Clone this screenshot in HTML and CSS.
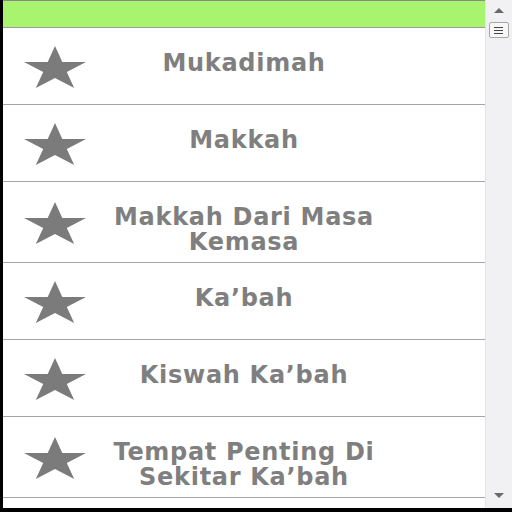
FILE: index.html
```html
<!DOCTYPE html>
<html lang="id">
<head>
  <meta charset="UTF-8">
  <meta name="viewport" content="width=device-width, initial-scale=1.0">
  <title>Sejarah Makkah</title>
  <link rel="stylesheet" href="styles.css">
</head>
<body>

  <div class="screen">
    <!-- Menu list -->
    <div class="list">
      <div class="header"></div>

      <div class="item">
        <svg class="star" viewBox="0 0 62 42"><polygon points="31,0 38.3,16 62,16 42.8,25.9 50.2,42 31,32.1 11.8,42 19.2,25.9 0,16 23.7,16"/></svg>
        <span class="title">Mukadimah</span>
      </div>
      <div class="item">
        <svg class="star" viewBox="0 0 62 42"><polygon points="31,0 38.3,16 62,16 42.8,25.9 50.2,42 31,32.1 11.8,42 19.2,25.9 0,16 23.7,16"/></svg>
        <span class="title">Makkah</span>
      </div>
      <div class="item">
        <svg class="star" viewBox="0 0 62 42"><polygon points="31,0 38.3,16 62,16 42.8,25.9 50.2,42 31,32.1 11.8,42 19.2,25.9 0,16 23.7,16"/></svg>
        <span class="title">Makkah Dari Masa Kemasa</span>
      </div>
      <div class="item">
        <svg class="star" viewBox="0 0 62 42"><polygon points="31,0 38.3,16 62,16 42.8,25.9 50.2,42 31,32.1 11.8,42 19.2,25.9 0,16 23.7,16"/></svg>
        <span class="title">Ka’bah</span>
      </div>
      <div class="item">
        <svg class="star" viewBox="0 0 62 42"><polygon points="31,0 38.3,16 62,16 42.8,25.9 50.2,42 31,32.1 11.8,42 19.2,25.9 0,16 23.7,16"/></svg>
        <span class="title">Kiswah Ka’bah</span>
      </div>
      <div class="item">
        <svg class="star" viewBox="0 0 62 42"><polygon points="31,0 38.3,16 62,16 42.8,25.9 50.2,42 31,32.1 11.8,42 19.2,25.9 0,16 23.7,16"/></svg>
        <span class="title">Tempat Penting Di Sekitar Ka’bah</span>
      </div>
    </div>

    <!-- Fake scrollbar -->
    <div class="scrollbar">
      <span class="arrow up"></span>
      <div class="thumb">
        <span></span><span></span><span></span>
      </div>
      <div class="track"></div>
      <span class="arrow down"></span>
    </div>
  </div>

</body>
</html>
```

FILE: styles.css
```css
/* Basic page styles */
body, html {
  margin: 0;
  padding: 0;
  background-color: #000;
  height: 100%;
  overflow: hidden;
}

.screen {
  display: flex;
  margin-left: 3px;
  height: 508px;
  background-color: #fff;
  overflow: hidden;
}

/* List */
.list {
  flex: 1;
  overflow: hidden;
  border-top: 1px solid #8a8a8a;
}

.header {
  height: 26px;
  background-color: #a8f46e;
  border-bottom: 1px solid #9a9a9a;
}

.item {
  display: grid;
  grid-template-columns: 100px 1fr 100px;
  align-items: center;
  min-height: 77px;
  padding: 23px 0 7px;
  box-sizing: border-box;
  border-bottom: 1px solid #a4a4a4;
}

.star {
  width: 62px;
  height: 42px;
  margin-left: 21px;
  margin-top: -15px;
  fill: #7b7b7b;
}

.title {
  align-self: start;
  text-align: center;
  font-family: "DejaVu Sans", Verdana, sans-serif;
  font-weight: bold;
  font-size: 24px;
  letter-spacing: 0.7px;
  line-height: 25px;
  color: #7f7f7f;
}

/* Scrollbar */
.scrollbar {
  width: 26px;
  display: flex;
  flex-direction: column;
  align-items: center;
  background-color: #f1f1f3;
  border-left: 1px solid #e4e4e6;
}

.arrow {
  width: 0;
  height: 0;
  border-left: 5px solid transparent;
  border-right: 5px solid transparent;
}

.arrow.up {
  margin-top: 8px;
  border-bottom: 5px solid #6a6a6a;
}

.arrow.down {
  margin-bottom: 10px;
  border-top: 5px solid #6a6a6a;
}

.thumb {
  margin-top: 9px;
  width: 20px;
  height: 16px;
  box-sizing: border-box;
  border: 1px solid #a8a8a8;
  border-radius: 2px;
  background-color: #f7f7f7;
  display: flex;
  flex-direction: column;
  justify-content: center;
  gap: 2px;
  padding-left: 4px;
}

.thumb span {
  width: 9px;
  height: 1px;
  background-color: #444;
}

.track {
  flex: 1;
}
```
